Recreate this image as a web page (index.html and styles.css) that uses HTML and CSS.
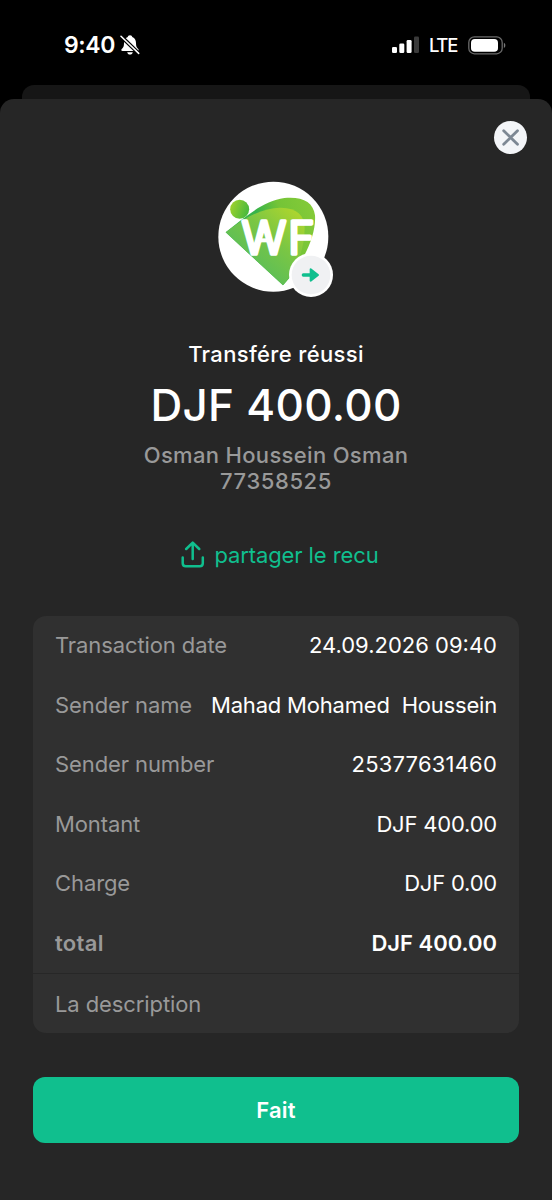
FILE: index.html
```html
<!DOCTYPE html>
<html lang="fr">
<head>
<meta charset="utf-8">
<title>Transfére réussi</title>
<link rel="stylesheet" href="styles.css">
</head>
<body>
<div class="phone">
  <header class="status">
    <div class="status-left">
      <span class="time">9:40</span>
      <svg class="bell" width="20" height="22" viewBox="0 0 20 22">
        <path d="M10 1.2c-1.4 0-2.2.9-2.3 1.9C5 4.200 4 6.600 4 9.300c0 3-.7 4.300-2 5.500-1.200 1.100-.8 2.200.6 2.200h14.800c1.400 0 1.800-1.100.6-2.200-1.300-1.200-2-2.500-2-5.500 0-2.700-1-5.100-3.700-6.200C12.200 2.100 11.400 1.200 10 1.200zM7.200 18.300h5.600c-.3 1.500-1.400 2.300-2.800 2.300s-2.500-.8-2.800-2.300z" fill="#fff"/>
        <path d="M1 2.200L18.700 19.400" stroke="#000" stroke-width="3.800"/>
        <path d="M1 2.200L18.700 19.400" stroke="#fff" stroke-width="1.500" stroke-linecap="round"/>
      </svg>
    </div>
    <div class="status-right">
      <svg class="signal" width="28" height="18" viewBox="0 0 28 18">
        <rect x="0" y="11" width="5" height="6" rx="1.3" fill="#fff"/>
        <rect x="7.300" y="7.500" width="5" height="9.500" rx="1.300" fill="#fff"/>
        <rect x="14.600" y="4" width="5" height="13" rx="1.300" fill="#fff"/>
        <rect x="22" y="0.500" width="5" height="16.500" rx="1.300" fill="#3a3a3a"/>
      </svg>
      <span class="network">LTE</span>
      <svg class="battery" width="38" height="19" viewBox="0 0 38 19">
        <rect x=".8" y=".8" width="33.400" height="17" rx="5.600" fill="none" stroke="#6a6a6a" stroke-width="1.300"/>
        <rect x="3" y="2.900" width="27" height="12.800" rx="3.800" fill="#fff"/>
        <path d="M35.900 6.800c1.900.9 1.900 4.300 0 5.200z" fill="#777"/>
      </svg>
    </div>
  </header>
  <div class="sheet-behind"></div>
  <main class="sheet">
    <div class="toolbar">
      <button class="close" aria-label="Fermer">
        <svg width="33" height="33" viewBox="0 0 33 33"><path d="M9.700 9.700L23.500 23.300M23.500 9.700L9.700 23.300" stroke="#7d8894" stroke-width="2.800" stroke-linecap="round"/></svg>
      </button>
    </div>
    <svg class="logo" width="140" height="130" viewBox="0 0 420 390">
      <defs>
        <linearGradient id="outer" x1="60" y1="190" x2="320" y2="100" gradientUnits="userSpaceOnUse"><stop offset="0" stop-color="#35b34c"/><stop offset=".4" stop-color="#36b34a"/><stop offset=".65" stop-color="#74c437"/><stop offset="1" stop-color="#84ca38"/></linearGradient>
        <linearGradient id="inner" x1="130" y1="300" x2="290" y2="120" gradientUnits="userSpaceOnUse"><stop offset="0" stop-color="#57bd5b"/><stop offset=".5" stop-color="#7ac644"/><stop offset="1" stop-color="#b3d72b"/></linearGradient>
        <linearGradient id="dot" x1="75" y1="105" x2="132" y2="125" gradientUnits="userSpaceOnUse"><stop offset="0" stop-color="#a0d22c"/><stop offset="1" stop-color="#45b83e"/></linearGradient>
      </defs>
      <circle cx="205" cy="200" r="165" fill="#fff"/>
      <path d="M62 187C120 140 175 93 238 84C292 79 325 96 330 136C335 205 285 292 234 346Z" fill="url(#outer)"/>
      <path d="M62 187C120 140 178 112 228 113C275 114 299 136 299 175C298 235 279 293 234 346Z" fill="url(#inner)"/>
      <circle cx="104" cy="118" r="28.500" fill="url(#dot)"/>
      <path d="M160 211H192" stroke="#fff" stroke-width="12"/>
      <text class="logo-text" x="110" y="252" textLength="133" lengthAdjust="spacingAndGlyphs">W</text>
      <text class="logo-text" x="250" y="252" textLength="79" lengthAdjust="spacingAndGlyphs">F</text>
      <circle cx="318" cy="315" r="66" fill="#fff"/>
      <circle cx="318" cy="315" r="58" fill="#f0f1f3"/>
      <path d="M295 315H320" stroke="#10bf8e" stroke-width="10" stroke-linecap="round"/>
      <path d="M317 298L339 315L317 332Z" fill="#10bf8e" stroke="#10bf8e" stroke-width="6" stroke-linejoin="round"/>
    </svg>
    <h1 class="title">Transfére réussi</h1>
    <div class="amount">DJF 400.00</div>
    <div class="recipient"><span class="recipient-name">Osman Houssein Osman</span><span class="recipient-number">77358525</span></div>
    <a class="share">
      <svg width="24" height="28" viewBox="0 0 24 28"><path d="M1.700 16.500V22.300Q1.700 25.300 4.700 25.300H18.800Q21.800 25.300 21.800 22.300V16.500M11.700 18V2M5.200 8L11.700 1.600L18.200 8" fill="none" stroke="#10bf8e" stroke-width="2.500" stroke-linecap="round" stroke-linejoin="round"/></svg>
      <span class="share-label">partager le recu</span>
    </a>
    <section class="card">
      <div class="row"><span class="label">Transaction date</span><span class="value date">24.09.2026 09:40</span></div>
      <div class="row"><span class="label">Sender name</span><span class="value">Mahad Mohamed&nbsp; Houssein</span></div>
      <div class="row"><span class="label">Sender number</span><span class="value number">25377631460</span></div>
      <div class="row"><span class="label">Montant</span><span class="value">DJF 400.00</span></div>
      <div class="row"><span class="label">Charge</span><span class="value">DJF 0.00</span></div>
      <div class="row total"><span class="label">total</span><span class="value">DJF 400.00</span></div>
      <div class="row description"><span class="label">La description</span></div>
    </section>
    <button class="done">Fait</button>
  </main>
</div>
</body>
</html>
```
FILE: styles.css
```css
* { box-sizing: border-box; }
body { margin: 0; background: #000; font-family: Inter, "Liberation Sans", sans-serif; color: #fff; }
button { border: 0; padding: 0; font: inherit; color: inherit; }
svg { display: block; flex: none; }
.phone { width: 552px; height: 1200px; display: flex; flex-direction: column; overflow: hidden; }
.status { height: 85px; flex: none; display: flex; justify-content: space-between; align-items: flex-start; padding: 31px 46px 0 64px; }
.status-left, .status-right { display: flex; align-items: center; height: 28px; }
.time { font-size: 23px; font-weight: 600; letter-spacing: -0.4px; }
.bell { margin-left: 5px; }
.network { font-size: 18.5px; font-weight: 500; letter-spacing: -1.3px; margin: 0 11px 0 9px; }
.sheet-behind { height: 14px; flex: none; margin: 0 22px; background: #161616; border-radius: 12px 12px 0 0; }
.sheet { flex: 1; background: #262626; border-radius: 14px 14px 0 0; padding: 22px 33px 0; display: flex; flex-direction: column; align-items: center; }
.toolbar { align-self: stretch; display: flex; justify-content: flex-end; margin-right: -8px; }
.close { width: 33px; height: 33px; border-radius: 50%; background: #f3f5f8; }
.logo { margin: 16px 0 0 -2px; }
.logo-text { font-family: Inter, sans-serif; font-size: 135px; font-weight: 300; fill: #fff; stroke: #fff; stroke-width: 11px; stroke-linejoin: round; }
.title { margin: 41px 0 0; font-size: 22px; line-height: 26px; font-weight: 500; letter-spacing: 0.35px; white-space: nowrap; }
.amount { margin-top: 11px; font-size: 44px; line-height: 54px; font-weight: 500; letter-spacing: 0.3px; white-space: nowrap; }
.recipient { margin-top: 10px; display: flex; flex-direction: column; align-items: center; font-size: 22px; line-height: 26px; font-weight: 500; letter-spacing: 0.33px; color: #999; }
.recipient-number { letter-spacing: 0.6px; }
.share { margin: 47px 0 0 8px; display: flex; align-items: center; gap: 9px; height: 28px; color: #10bf8e; }
.share-label { font-size: 22px; letter-spacing: -0.1px; }
.card { align-self: stretch; margin-top: 46.5px; background: #303030; border-radius: 13px; font-size: 22px; }
.row { height: 59.5px; display: flex; align-items: center; justify-content: space-between; padding: 0 22px; white-space: nowrap; }
.label { color: #999; letter-spacing: -0.1px; }
.value { letter-spacing: -0.2px; }
.date { letter-spacing: 0; }
.number { letter-spacing: 0.2px; }
.total { font-weight: 600; }
.total .label { letter-spacing: 0.3px; }
.total .value { letter-spacing: 0; }
.description { height: 60.5px; padding-top: 1px; border-top: 1.5px solid #272727; }
.done { align-self: stretch; height: 66px; margin-top: 44px; border-radius: 12px; background: #10bf8e; font-size: 22px; font-weight: 600; letter-spacing: 0.2px; }
```
